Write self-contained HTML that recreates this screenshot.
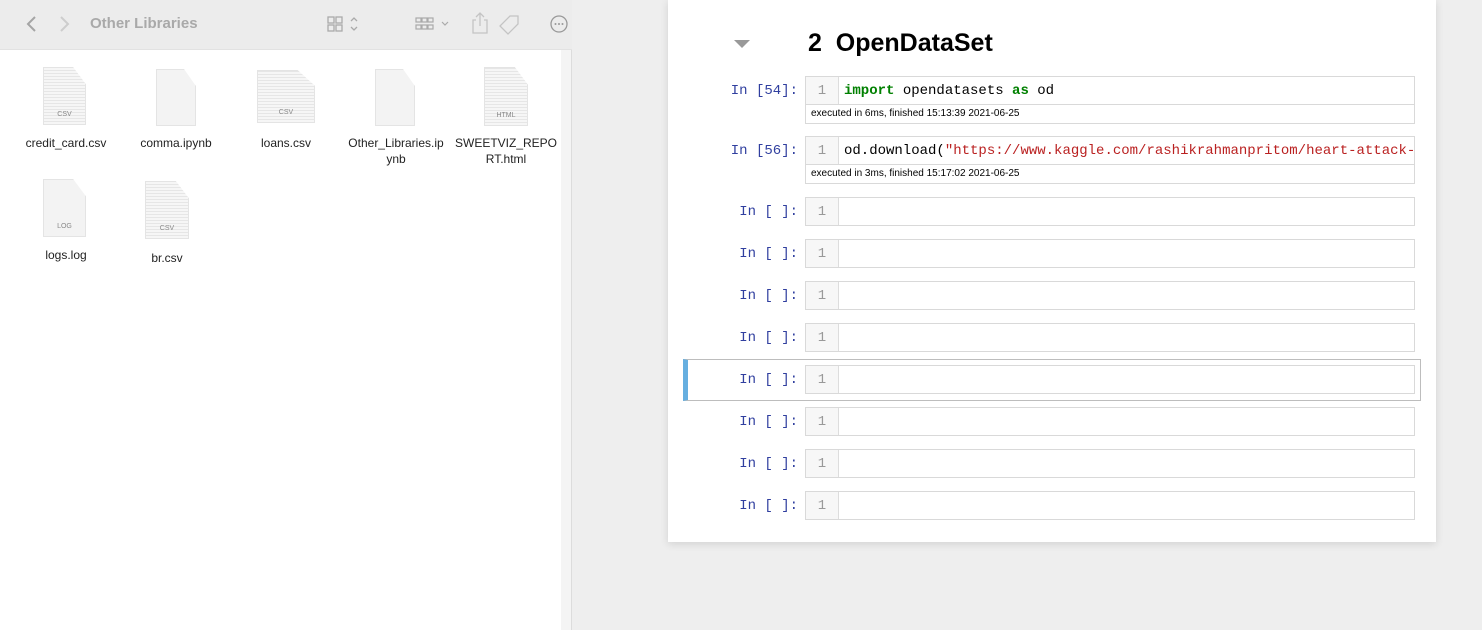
<!DOCTYPE html>
<html><head><style>
*{margin:0;padding:0;box-sizing:border-box}
body{width:1482px;height:630px;background:#eeeeee;position:relative;overflow:hidden;font-family:"Liberation Sans",sans-serif}
.finder{position:absolute;left:0;top:0;width:561px;height:630px;background:#fff}
.tb{position:absolute;left:0;top:0;width:572px;height:50px;background:#ececec;border-bottom:1px solid #e2e2e2}
.sb{position:absolute;left:561px;top:50px;width:11px;height:580px;background:#f4f4f4;border-right:1px solid #dcdcdc}
.title{position:absolute;left:90px;top:15px;font-size:15px;font-weight:bold;color:#a9a9a9}
.ic{position:absolute;color:#b5b5b5}
.file{position:absolute;width:110px;text-align:center;font-size:12px;color:#222;line-height:16px}
.doc{position:absolute;background:#f3f3f3;border:1px solid #e4e4e4;clip-path:polygon(0 0,70% 0,100% 30%,100% 100%,0 100%)}
.doc span{position:absolute;bottom:6px;width:100%;text-align:center;font-size:7px;color:#888}
.doc.lines{background:repeating-linear-gradient(0deg,#f6f6f6 0 2px,#e6e6e6 2px 3px)}
.nb{position:absolute;left:668px;top:0;width:768px;height:542px;background:#fff;box-shadow:0 2px 8px rgba(0,0,0,.12)}
.h{position:absolute;left:808px;top:29px;font-size:25px;font-weight:bold;color:#000}
.tri{position:absolute;left:734px;top:40px;width:0;height:0;border-left:8px solid transparent;border-right:8px solid transparent;border-top:8px solid #999}
.p{position:absolute;font-family:"Liberation Mono",monospace;font-size:14px;color:#303f9f;width:120px;text-align:right}
.inp{position:absolute;left:805px;width:610px;height:29px;border:1px solid #d9d9d9;background:#fff}
.inp .g{position:absolute;left:0;top:0;width:33px;height:100%;border-right:1px solid #ddd;background:#f7f7f7;font-family:"Liberation Mono",monospace;font-size:14px;color:#999;text-align:center;line-height:28px}
.inp .c{position:absolute;left:38px;top:0;line-height:28px;font-family:"Liberation Mono",monospace;font-size:14px;color:#000;white-space:nowrap;overflow:hidden;width:570px}
.out{position:absolute;left:805px;width:610px;height:19px;border:1px solid #d9d9d9;border-top:none;font-size:10px;line-height:18px;padding-left:5px;color:#000}
.k{color:#008000;font-weight:bold}.s{color:#ba2121}
.sel{position:absolute;left:683px;top:359px;width:738px;height:42px;border:1px solid #bdbdbd;border-left:5px solid #66afe0}
</style></head><body>
<div class="finder"></div>
<div class="tb"></div>
<div class="sb"></div>
<svg class="ic" style="left:22px;top:14px" width="60" height="20"><path d="M13 3 L6 10 L13 17" fill="none" stroke="#a5a5a5" stroke-width="2"/><path d="M39 3 L46 10 L39 17" fill="none" stroke="#cdcdcd" stroke-width="2"/></svg>
<div class="title">Other Libraries</div>
<svg class="ic" style="left:326px;top:14px" width="36" height="20"><g fill="none" stroke="#aaa" stroke-width="1.3"><rect x="2" y="3" width="6" height="6"/><rect x="10" y="3" width="6" height="6"/><rect x="2" y="11" width="6" height="6"/><rect x="10" y="11" width="6" height="6"/><path d="M25 7 L28 4 L31 7 M25 13 L28 16 L31 13"/></g></svg>
<svg class="ic" style="left:414px;top:14px" width="40" height="20"><g fill="none" stroke="#aaa" stroke-width="1.2"><rect x="2" y="4" width="5" height="4"/><rect x="8" y="4" width="5" height="4"/><rect x="14" y="4" width="5" height="4"/><rect x="2" y="11" width="5" height="4"/><rect x="8" y="11" width="5" height="4"/><rect x="14" y="11" width="5" height="4"/><path d="M28 8 L31 11 L34 8"/></g></svg>
<svg class="ic" style="left:470px;top:10px" width="100" height="28"><g fill="none" stroke="#c4c4c4" stroke-width="1.3"><path d="M6 10 H3 V23 H17 V10 H14 M10 16 V3 M6 7 L10 3 L14 7"/><path d="M40 6 L48 6 L48 14 L38 24 L30 16 Z"/><circle cx="89" cy="14" r="8" stroke="#999"/></g><g fill="#999"><circle cx="85.5" cy="14" r="1"/><circle cx="89" cy="14" r="1"/><circle cx="92.5" cy="14" r="1"/></g></svg>

<div class="doc lines" style="left:43px;top:67px;width:43px;height:58px"><span>CSV</span></div>
<div class="file" style="left:11px;top:135px">credit_card.csv</div>
<div class="doc" style="left:156px;top:69px;width:40px;height:57px"></div>
<div class="file" style="left:121px;top:135px">comma.ipynb</div>
<div class="doc lines" style="left:257px;top:70px;width:58px;height:53px"><span>CSV</span></div>
<div class="file" style="left:231px;top:135px">loans.csv</div>
<div class="doc" style="left:375px;top:69px;width:40px;height:57px"></div>
<div class="file" style="left:341px;top:135px">Other_Libraries.ip<br>ynb</div>
<div class="doc lines" style="left:484px;top:67px;width:44px;height:59px"><span>HTML</span></div>
<div class="file" style="left:451px;top:135px">SWEETVIZ_REPO<br>RT.html</div>
<div class="doc" style="left:43px;top:179px;width:43px;height:58px"><span>LOG</span></div>
<div class="file" style="left:11px;top:247px">logs.log</div>
<div class="doc lines" style="left:145px;top:181px;width:44px;height:58px"><span>CSV</span></div>
<div class="file" style="left:112px;top:250px">br.csv</div>

<div class="nb"></div>
<div class="tri"></div>
<div class="h">2&nbsp; OpenDataSet</div>

<div class="p" style="left:678px;top:83px">In [54]:</div>
<div class="inp" style="top:76px"><div class="g">1</div><div class="c"><span class="k">import</span> opendatasets <span class="k">as</span> od</div></div>
<div class="out" style="top:105px">executed in 6ms, finished 15:13:39 2021-06-25</div>
<div class="p" style="left:678px;top:143px">In [56]:</div>
<div class="inp" style="top:136px"><div class="g">1</div><div class="c">od.download(<span class="s">"https://www.kaggle.com/rashikrahmanpritom/heart-attack-</span></div></div>
<div class="out" style="top:165px">executed in 3ms, finished 15:17:02 2021-06-25</div>

<div class="sel"></div>
<div class="p" style="left:678px;top:204px">In [ ]:</div><div class="inp" style="top:197px"><div class="g">1</div></div>
<div class="p" style="left:678px;top:246px">In [ ]:</div><div class="inp" style="top:239px"><div class="g">1</div></div>
<div class="p" style="left:678px;top:288px">In [ ]:</div><div class="inp" style="top:281px"><div class="g">1</div></div>
<div class="p" style="left:678px;top:330px">In [ ]:</div><div class="inp" style="top:323px"><div class="g">1</div></div>
<div class="p" style="left:678px;top:372px">In [ ]:</div><div class="inp" style="top:365px"><div class="g">1</div></div>
<div class="p" style="left:678px;top:414px">In [ ]:</div><div class="inp" style="top:407px"><div class="g">1</div></div>
<div class="p" style="left:678px;top:456px">In [ ]:</div><div class="inp" style="top:449px"><div class="g">1</div></div>
<div class="p" style="left:678px;top:498px">In [ ]:</div><div class="inp" style="top:491px"><div class="g">1</div></div>
</body></html>
